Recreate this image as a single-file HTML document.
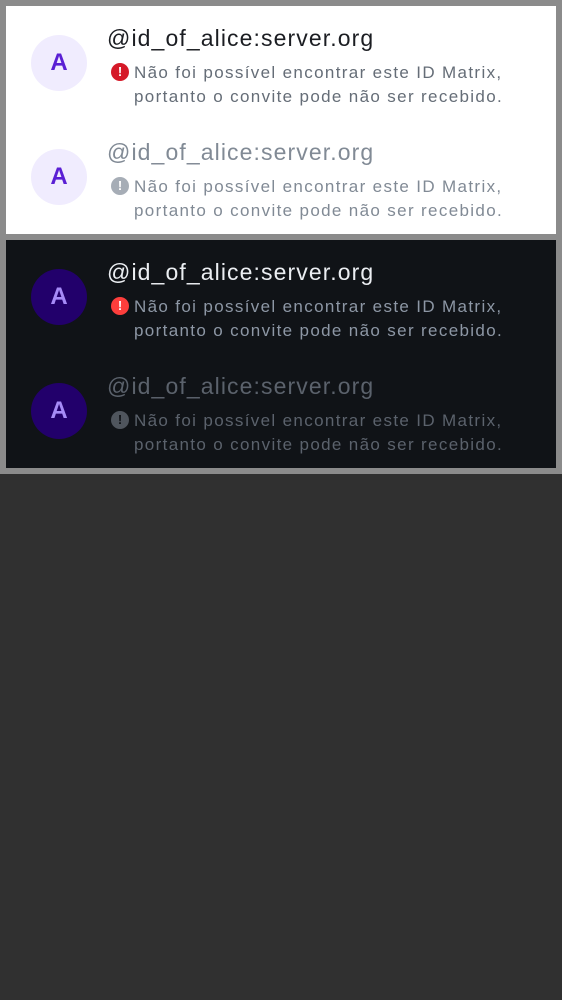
<!DOCTYPE html>
<html><head><style>
body{margin:0;width:562px;height:1000px;background:#303030;font-family:"Liberation Sans",sans-serif;position:relative;overflow:hidden}
.frame{position:absolute;left:0;top:0;width:562px;height:474px;background:#8b8b8b}
.panel{position:absolute;left:6px;width:550px;height:228px}
.row{position:absolute;left:0;width:550px;height:114px}
.av{position:absolute;left:25px;top:29px;width:56px;height:56px;border-radius:50%;display:flex;align-items:center;justify-content:center;font-weight:bold;font-size:24px}
.t{position:absolute;left:101px;top:19px;font-size:23px;letter-spacing:1.1px;white-space:nowrap}
.s{position:absolute;left:128px;top:55px;font-size:17px;line-height:24px;letter-spacing:1.35px;white-space:nowrap}
.ic{position:absolute;left:105px;top:57px;width:18px;height:18px;border-radius:50%;color:#fff;font-size:13px;font-weight:bold;text-align:center;line-height:18px}
</style></head><body>
<div class="frame"></div>
<div class="panel" style="top:6px;background:#fff">
 <div class="row" style="top:0">
  <div class="av" style="background:#f0ecfe;color:#5a1fd4">A</div>
  <div class="t" style="color:#1b1d22">@id_of_alice:server.org</div>
  <div class="ic" style="background:#d51928">!</div>
  <div class="s" style="color:#656d77">Não foi possível encontrar este ID Matrix,<br>portanto o convite pode não ser recebido.</div>
 </div>
 <div class="row" style="top:114px">
  <div class="av" style="background:#f0ecfe;color:#5a1fd4">A</div>
  <div class="t" style="color:#818a95">@id_of_alice:server.org</div>
  <div class="ic" style="background:#a6adb6">!</div>
  <div class="s" style="color:#818a95">Não foi possível encontrar este ID Matrix,<br>portanto o convite pode não ser recebido.</div>
 </div>
</div>
<div class="panel" style="top:240px;background:#101317">
 <div class="row" style="top:0">
  <div class="av" style="background:#22006b;color:#a68bf7">A</div>
  <div class="t" style="color:#ebeef2">@id_of_alice:server.org</div>
  <div class="ic" style="background:#fd3e3c">!</div>
  <div class="s" style="color:#8d97a5">Não foi possível encontrar este ID Matrix,<br>portanto o convite pode não ser recebido.</div>
 </div>
 <div class="row" style="top:114px">
  <div class="av" style="background:#22006b;color:#a68bf7">A</div>
  <div class="t" style="color:#5b626c">@id_of_alice:server.org</div>
  <div class="ic" style="background:#4f555d;color:#101317">!</div>
  <div class="s" style="color:#5b626c">Não foi possível encontrar este ID Matrix,<br>portanto o convite pode não ser recebido.</div>
 </div>
</div>
</body></html>
